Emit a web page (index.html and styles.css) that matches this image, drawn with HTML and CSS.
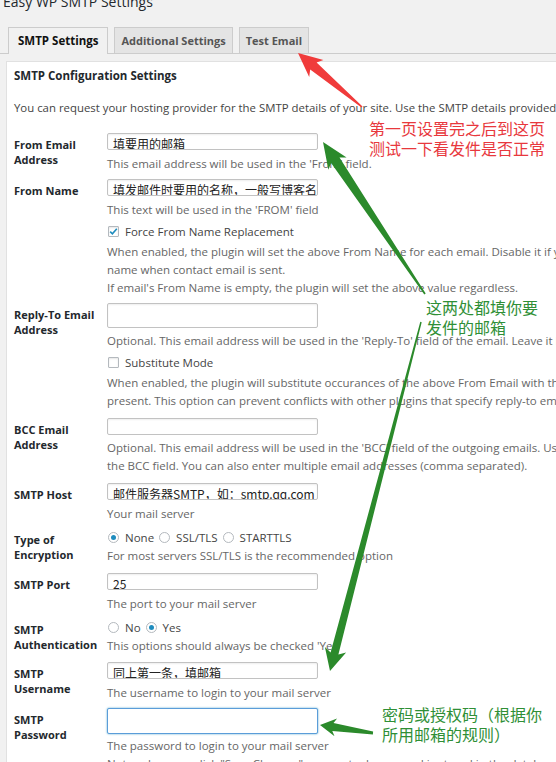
FILE: index.html
```html
<!DOCTYPE html>
<html lang="en">
<head>
<meta charset="utf-8">
<title>Easy WP SMTP Settings</title>
<link rel="stylesheet" href="styles.css">
</head>
<body>
<div class="page">
  <h1 class="title">Easy WP SMTP Settings</h1>
  <nav class="tabs">
    <a class="tab active">SMTP Settings</a>
    <a class="tab">Additional Settings</a>
    <a class="tab">Test Email</a>
  </nav>
  <section class="panel">
    <h3 class="panel-title">SMTP Configuration Settings</h3>
    <p class="intro">You can request your hosting provider for the SMTP details of your site. Use the SMTP details provided by your hosting provider to configure the following settings.</p>
    <div class="form">
      <div class="row g6">
        <div class="label">From Email<br>Address</div>
        <div class="field">
          <div class="input">填要用的邮箱</div>
          <div class="desc">This email address will be used in the 'From' field.</div>
        </div>
      </div>
      <div class="row g6">
        <div class="label">From Name</div>
        <div class="field">
          <div class="input">填发邮件时要用的名称，一般写博客名称</div>
          <div class="desc">This text will be used in the 'FROM' field</div>
          <div class="check"><span class="box"><svg viewBox="0 0 11 11" width="11" height="11"><path d="M2.2 5.6 L4.4 7.8 L8.8 2.8" fill="none" stroke="#1e8cbe" stroke-width="1.6"/></svg></span>Force From Name Replacement</div>
          <div class="desc m3">When enabled, the plugin will set the above From Name for each email. Disable it if you're using contact form plugins, it will prevent the plugin from replacing form submitter's<br>name when contact email is sent.<br>If email's From Name is empty, the plugin will set the above value regardless.</div>
        </div>
      </div>
      <div class="row g8">
        <div class="label">Reply-To Email<br>Address</div>
        <div class="field">
          <div class="input tall"></div>
          <div class="desc m4">Optional. This email address will be used in the 'Reply-To' field of the email. Leave it blank to use 'From' email as the reply-to value.</div>
          <div class="check"><span class="box"></span>Substitute Mode</div>
          <div class="desc m3">When enabled, the plugin will substitute occurances of the above From Email with the Reply-To Email address when Reply-To header is not<br>present. This option can prevent conflicts with other plugins that specify reply-to email address but still replaces the From Email.</div>
        </div>
      </div>
      <div class="row g8">
        <div class="label">BCC Email<br>Address</div>
        <div class="field">
          <div class="input"></div>
          <div class="desc m4">Optional. This email address will be used in the 'BCC' field of the outgoing emails. Use this option carefully since all your outgoing emails from this site will add this address to<br>the BCC field. You can also enter multiple email addresses (comma separated).</div>
        </div>
      </div>
      <div class="row g5">
        <div class="label">SMTP Host</div>
        <div class="field">
          <div class="input">邮件服务器SMTP，如：smtp.qq.com</div>
          <div class="desc">Your mail server</div>
        </div>
      </div>
      <div class="row g8">
        <div class="label">Type of<br>Encryption</div>
        <div class="field">
          <div class="opts">
            <span class="opt"><span class="radio on"></span>None</span>
            <span class="opt"><span class="radio"></span>SSL/TLS</span>
            <span class="opt"><span class="radio"></span>STARTTLS</span>
          </div>
          <div class="desc m1">For most servers SSL/TLS is the recommended option</div>
        </div>
      </div>
      <div class="row g5">
        <div class="label">SMTP Port</div>
        <div class="field">
          <div class="input">25</div>
          <div class="desc">The port to your mail server</div>
        </div>
      </div>
      <div class="row g7">
        <div class="label">SMTP<br>Authentication</div>
        <div class="field">
          <div class="opts">
            <span class="opt"><span class="radio"></span>No</span>
            <span class="opt"><span class="radio on"></span>Yes</span>
          </div>
          <div class="desc m1">This options should always be checked 'Yes'</div>
        </div>
      </div>
      <div class="row g6">
        <div class="label">SMTP<br>Username</div>
        <div class="field">
          <div class="input">同上第一条，填邮箱</div>
          <div class="desc">The username to login to your mail server</div>
        </div>
      </div>
      <div class="row g6">
        <div class="label">SMTP<br>Password</div>
        <div class="field">
          <div class="input focus"></div>
          <div class="desc m3">The password to login to your mail server</div>
          <div class="desc m0">Note: when you click "Save Changes", your actual password is stored in the database and then used to send emails.</div>
        </div>
      </div>
    </div>
  </section>
</div>

<div class="note red">第一页设置完之后到这页<br>测试一下看发件是否正常</div>
<div class="note green n1">这两处都填你要<br>发件的邮箱</div>
<div class="note green n2">密码或授权码（根据你<br>所用邮箱的规则）</div>

<svg class="arrows" width="556" height="762" viewBox="0 0 556 762">
  <polygon class="a-red" points="298,53 323.4,60.1 316.6,62.4 362.5,106.4 361.5,107.6 310.2,69.4 309.2,76.9"/>
  <polygon class="a-green" points="323,142 346.6,157.5 339.5,157.5 425.7,293.6 424.3,294.4 331.1,163.1 328.4,169.7"/>
  <polygon class="a-green" points="330,671 346.1,652.5 338.4,654.6 421.7,322.2 420.3,321.8 330.6,652.6 324.9,646.9"/>
  <polygon class="a-green" points="320,725 337.1,718.5 333.5,722.9 373.1,731.5 372.9,734.5 332.3,730.9 334.5,736.3"/>
</svg>
</body>
</html>
```

FILE: styles.css
```css
html, body {
  margin: 0;
  height: 762px;
  overflow: hidden;
}
body {
  position: relative;
  background: #f1f1f1;
  font-family: "Open Sans", "Noto Sans CJK SC", sans-serif;
  color: #444;
}
.page {
  width: 1200px;
}
.title {
  margin: -7px 0 0 3px;
  font-size: 14px;
  line-height: 18px;
  font-weight: 400;
  color: #23282d;
}
.tabs {
  display: flex;
  gap: 6px;
  margin-top: 16px;
  padding-left: 8px;
  border-bottom: 1px solid #ccc;
}
.tab {
  display: block;
  padding: 5px 6px 4px;
  line-height: 16px;
  font-size: 11px;
  font-weight: 700;
  color: #555;
  background: #e4e4e4;
  border: 1px solid #ccc;
  border-bottom: 0;
}
.tab.active {
  padding: 5px 9px;
  font-size: 11.5px;
  background: #f1f1f1;
  color: #111;
  margin-bottom: -1px;
}
.panel {
  margin: 7px 0 0 6px;
  background: #fff;
  border: 1px solid #e1e1e1;
  border-right: 0;
  padding: 0 7px 40px;
}
.panel-title {
  margin: 6px 0 0;
  font-size: 11.5px;
  line-height: 16px;
  font-weight: 700;
  color: #23282d;
}
.intro {
  margin: 15px 0 0;
  font-size: 11.4px;
  line-height: 18px;
  white-space: nowrap;
  color: #444;
}
.form {
  margin-top: 16px;
}
.row {
  display: grid;
  grid-template-columns: 93px 1fr;
}
.row.g5 { margin-bottom: 5px; }
.row.g6 { margin-bottom: 6px; }
.row.g7 { margin-bottom: 7px; }
.row.g8 { margin-bottom: 8px; }
.label {
  padding-top: 4px;
  font-size: 11px;
  line-height: 15px;
  font-weight: 700;
  color: #23282d;
}
.input {
  width: 211px;
  height: 17px;
  box-sizing: border-box;
  border: 1px solid #c2c2c2;
  border-radius: 2px;
  background: #fff;
  box-shadow: inset 0 1px 2px rgba(0, 0, 0, 0.07);
  padding: 2px 0 0 5px;
  overflow: hidden;
  font-family: "Noto Sans CJK SC", sans-serif;
  font-size: 12px;
  line-height: 16px;
  color: #222;
  white-space: nowrap;
}
.input.tall {
  height: 25px;
}
.input.focus {
  height: 26px;
  border-color: #5b9dd9;
  box-shadow: 0 0 2px rgba(30, 140, 190, 0.8);
}
.desc {
  margin-top: 5px;
  font-size: 11.5px;
  line-height: 18px;
  color: #666;
  white-space: nowrap;
}
.desc.m0 { margin-top: 0; }
.desc.m1 { margin-top: 1px; }
.desc.m3 { margin-top: 3px; }
.desc.m4 { margin-top: 4px; }
.check, .opts {
  display: flex;
  align-items: center;
  height: 18px;
  margin-top: 3px;
  font-size: 11.5px;
  color: #444;
}
.opts {
  margin-top: 0;
}
.box {
  display: block;
  width: 11px;
  height: 11px;
  box-sizing: border-box;
  border: 1px solid #b4b9be;
  border-radius: 1px;
  background: #fff;
  box-shadow: inset 0 1px 2px rgba(0, 0, 0, 0.1);
  margin: 0 6px 0 1px;
}
.box svg {
  display: block;
  margin: -1px 0 0 -1px;
}
.opt {
  display: flex;
  align-items: center;
}
.opt + .opt {
  margin-left: 4px;
}
.radio {
  display: flex;
  align-items: center;
  justify-content: center;
  width: 11px;
  height: 11px;
  box-sizing: border-box;
  border: 1px solid #b4b9be;
  border-radius: 50%;
  background: #fff;
  margin: 0 6px 0 1px;
}
.radio.on::after {
  content: "";
  width: 5px;
  height: 5px;
  border-radius: 50%;
  background: #1e8cbe;
}
.note {
  position: absolute;
  font-family: "Noto Sans CJK SC", sans-serif;
  font-size: 16px;
  line-height: 20px;
  white-space: nowrap;
}
.note.red {
  left: 369px;
  top: 118px;
  color: #e8383d;
}
.note.green {
  color: #2f8f36;
}
.note.n1 {
  left: 426px;
  top: 297px;
}
.note.n2 {
  left: 382px;
  top: 704px;
}
.arrows {
  position: absolute;
  left: 0;
  top: 0;
}
.a-red {
  fill: #f03b3b;
}
.a-green {
  fill: #2b8a2b;
}
```
